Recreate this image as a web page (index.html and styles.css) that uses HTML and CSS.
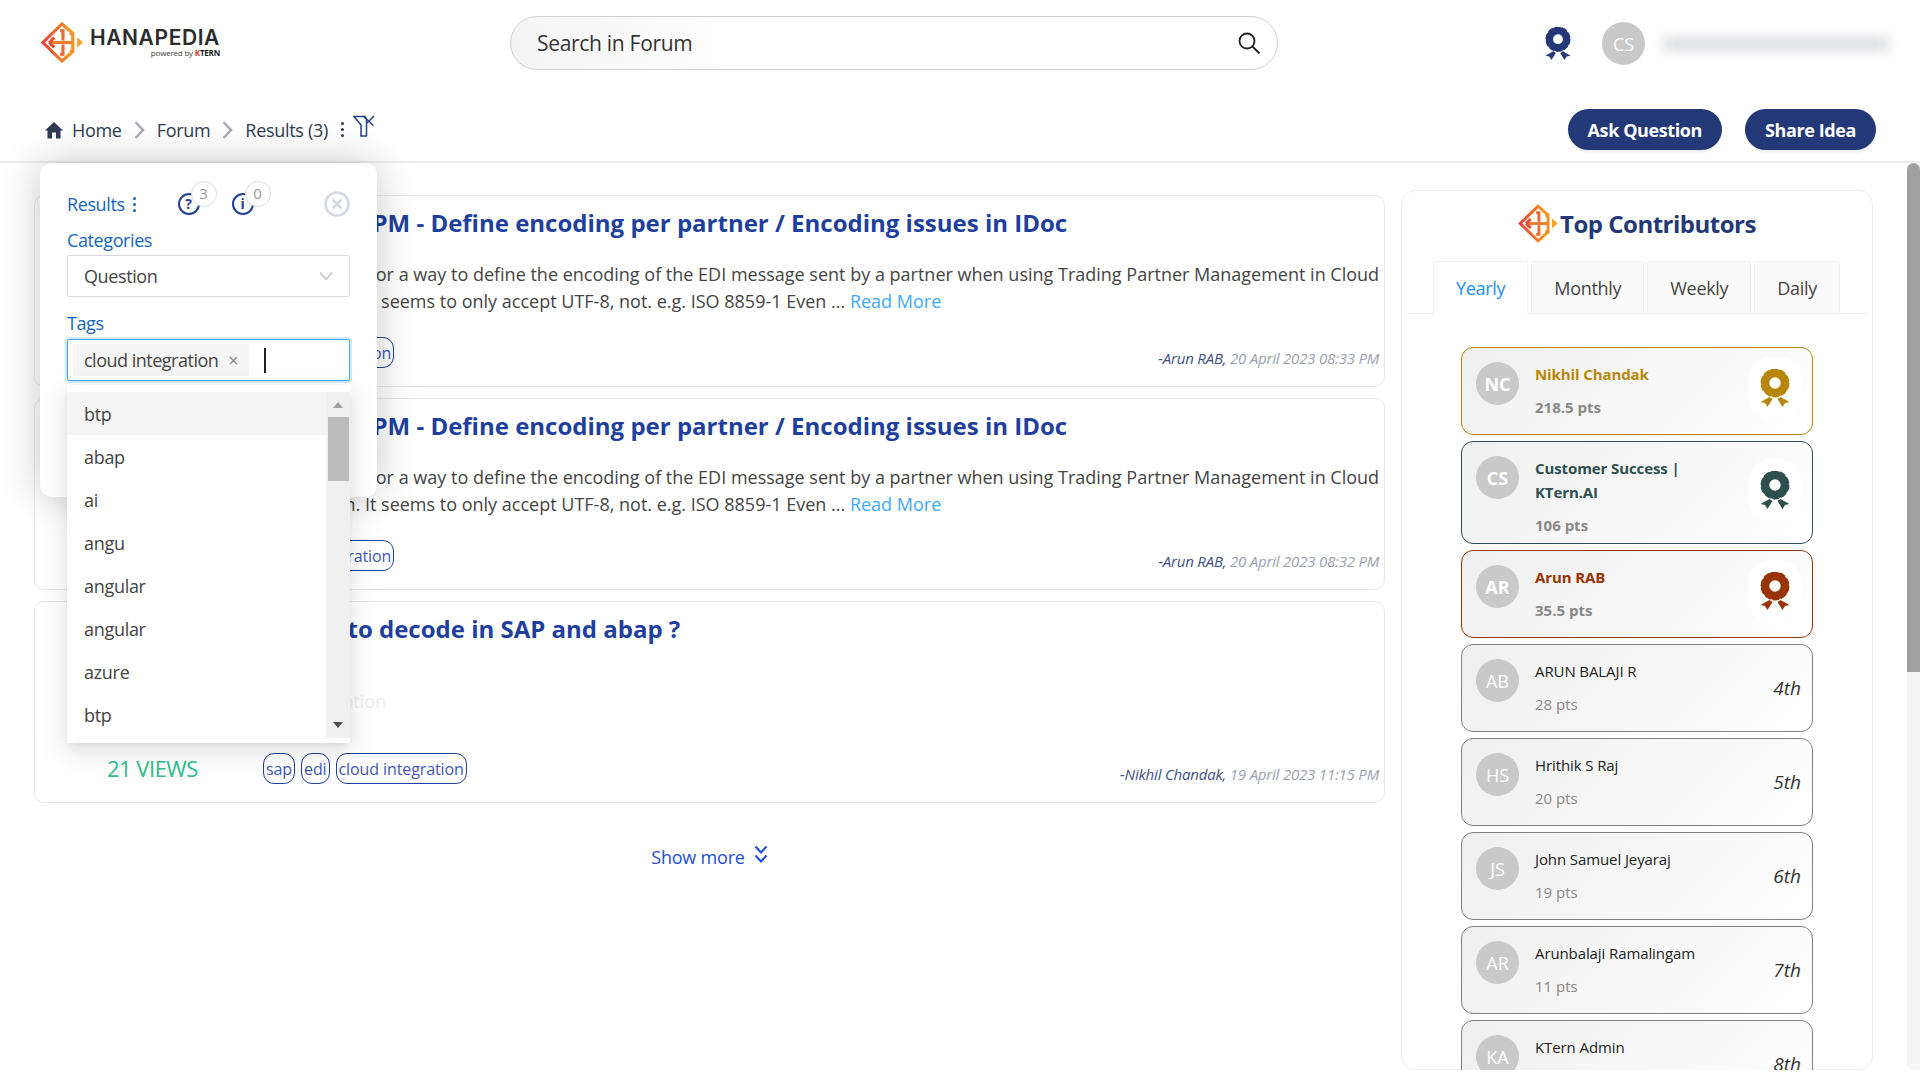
FILE: index.html
```html
<!DOCTYPE html>
<html lang="en">
<head>
<meta charset="UTF-8">
<title>Hanapedia Forum</title>
<link rel="stylesheet" href="styles.css">
</head>
<body>

<svg class="defs" width="0" height="0">
  <defs>
    <linearGradient id="logoGrad" x1="0" y1="0" x2="1" y2="0">
      <stop offset="0" stop-color="#ee4036"/>
      <stop offset="1" stop-color="#f7a11f"/>
    </linearGradient>
    <symbol id="logoMark" viewBox="0 0 44 42">
      <g fill="none" stroke="url(#logoGrad)" stroke-width="3.2" gradientUnits="userSpaceOnUse">
        <path d="M33 11.5 L22 2 L2.5 21 L22 40 L33 30.5"/>
        <path d="M9 21 H34" stroke="#f07b2b"/>
        <path d="M9 21 L14 16 M9 21 L14 26" stroke="#ee4c33"/>
        <path d="M20 9 H23 V19" stroke="#f0672f"/>
        <path d="M20 33 H23 V23" stroke="#f0672f"/>
        <path d="M30 12 H33 V30 H30" stroke="#f48f28"/>
      </g>
      <path d="M37.500 15.500 L43.500 21 L37.500 26.500 Z" fill="#f7a11f"/>
    </symbol>
    <symbol id="medal" viewBox="0 0 30 38">
      <circle cx="15" cy="14" r="9.800" fill="none" stroke="currentColor" stroke-width="8.200"/>
      <circle cx="15" cy="14" r="13.700" fill="none" stroke="currentColor" stroke-width="1.600" stroke-dasharray="6.500 2.100"/>
      <path d="M9.500 28 L0.500 33 L5 34 L7.500 38 L12.500 30 Z" fill="currentColor"/>
      <path d="M20.500 28 L29.500 33 L25 34 L22.500 38 L17.500 30 Z" fill="currentColor"/>
    </symbol>
  </defs>
</svg>

<div class="page">

  <header class="topbar">
    <div class="top-row">
      <div class="logo">
        <svg class="logo-mark"><use href="#logoMark"/></svg>
        <div class="logo-text">
          <span class="logo-name">HANAPEDIA</span>
          <span class="logo-sub">powered by <b><i>K</i>TERN</b></span>
        </div>
      </div>
      <div class="search">
        <span>Search in Forum</span>
        <svg width="24" height="24" viewBox="0 0 24 24" fill="none" stroke="#222" stroke-width="1.800"><circle cx="10" cy="10" r="7.500"/><path d="M15.500 15.500 L22.500 22.500"/></svg>
      </div>
      <div class="user">
        <svg class="user-medal"><use href="#medal"/></svg>
        <span class="avatar-sm">CS</span>
        <span class="user-blur"></span>
      </div>
    </div>
    <div class="crumb-row">
      <nav class="crumbs">
        <svg width="18" height="18" viewBox="0 0 18 18" fill="#2f3b52"><path d="M9 1 L18 9.500 H15.500 V17.500 H11 V11.500 H7 V17.500 H2.500 V9.500 H0 Z"/></svg>
        <span>Home</span>
        <svg class="crumb-sep" width="11" height="18" viewBox="0 0 11 18" fill="none" stroke="#a3a8b5" stroke-width="2.400"><path d="M1.500 1 L9 9 L1.500 17"/></svg>
        <span>Forum</span>
        <svg class="crumb-sep" width="11" height="18" viewBox="0 0 11 18" fill="none" stroke="#a3a8b5" stroke-width="2.400"><path d="M1.500 1 L9 9 L1.500 17"/></svg>
        <span>Results (3)</span>
        <span class="dots"><i></i><i></i><i></i></span>
        <svg class="filter-icon" width="22" height="22" viewBox="0 0 22 22" fill="none" stroke="#23408f" stroke-width="1.500"><path d="M1 1.500 H12 L13.500 4 V21 H8 V10 Z"/><path d="M10 1 L20.500 10.500 M21 1 L14 8"/></svg>
      </nav>
      <div class="actions">
        <button class="pill-btn">Ask Question</button>
        <button class="pill-btn">Share Idea</button>
      </div>
    </div>
  </header>

  <main class="main">
    <section class="results">
      <article class="card">
        <div class="card-views"></div>
        <div class="card-body">
          <h2>SAP CPI TPM - Define encoding per partner / Encoding issues in IDoc</h2>
          <p class="card-text">I am looking for a way to define the encoding of the EDI message sent by a partner when using Trading Partner Management in Cloud<br>Integration. It seems to only accept UTF-8, not. e.g. ISO 8859-1 Even ... <a href="#">Read More</a></p>
          <div class="card-foot">
            <div class="tags"><span>cloud integration</span></div>
            <div class="meta"><em>-Arun RAB,</em> 20 April 2023 08:33 PM</div>
          </div>
        </div>
      </article>

      <article class="card">
        <div class="card-views"></div>
        <div class="card-body">
          <h2>SAP CPI TPM - Define encoding per partner / Encoding issues in IDoc</h2>
          <p class="card-text">I am looking for a way to define the encoding of the EDI message sent by a partner when using Trading Partner Management in Cloud<br>Integration. It seems to only accept UTF-8, not. e.g. ISO 8859-1 Even ... <a href="#">Read More</a></p>
          <div class="card-foot">
            <div class="tags"><span>cloud integration</span></div>
            <div class="meta"><em>-Arun RAB,</em> 20 April 2023 08:32 PM</div>
          </div>
        </div>
      </article>

      <article class="card">
        <div class="card-views"><span>21 VIEWS</span></div>
        <div class="card-body">
          <h2>Where to decode in SAP and abap ?</h2>
          <p class="card-text card-text-empty">No description</p>
          <div class="card-foot">
            <div class="tags"><span>sap</span><span>edi</span><span>cloud integration</span></div>
            <div class="meta"><em>-Nikhil Chandak,</em> 19 April 2023 11:15 PM</div>
          </div>
        </div>
      </article>

      <a class="show-more" href="#">Show more
        <svg width="14" height="20" viewBox="0 0 14 20" fill="none" stroke="#1d4ed8" stroke-width="2"><path d="M1.500 1.500 L7 7.500 L12.500 1.500"/><path d="M1.500 10.500 L7 16.500 L12.500 10.500"/></svg>
      </a>
    </section>

    <aside class="contributors">
      <h3><svg class="heading-mark"><use href="#logoMark"/></svg>Top Contributors</h3>
      <div class="tabs">
        <span class="tab active">Yearly</span>
        <span class="tab">Monthly</span>
        <span class="tab">Weekly</span>
        <span class="tab">Daily</span>
      </div>
      <ul class="people">
        <li class="person gold">
          <span class="avatar">NC</span>
          <div class="person-info"><strong>Nikhil Chandak</strong><small>218.5 pts</small></div>
          <span class="medal-wrap"><svg><use href="#medal"/></svg></span>
        </li>
        <li class="person teal">
          <span class="avatar">CS</span>
          <div class="person-info"><strong>Customer Success | KTern.AI</strong><small>106 pts</small></div>
          <span class="medal-wrap"><svg><use href="#medal"/></svg></span>
        </li>
        <li class="person rust">
          <span class="avatar">AR</span>
          <div class="person-info"><strong>Arun RAB</strong><small>35.5 pts</small></div>
          <span class="medal-wrap"><svg><use href="#medal"/></svg></span>
        </li>
        <li class="person">
          <span class="avatar">AB</span>
          <div class="person-info"><strong>ARUN BALAJI R</strong><small>28 pts</small></div>
          <span class="rank">4th</span>
        </li>
        <li class="person">
          <span class="avatar">HS</span>
          <div class="person-info"><strong>Hrithik S Raj</strong><small>20 pts</small></div>
          <span class="rank">5th</span>
        </li>
        <li class="person">
          <span class="avatar">JS</span>
          <div class="person-info"><strong>John Samuel Jeyaraj</strong><small>19 pts</small></div>
          <span class="rank">6th</span>
        </li>
        <li class="person">
          <span class="avatar">AR</span>
          <div class="person-info"><strong>Arunbalaji Ramalingam</strong><small>11 pts</small></div>
          <span class="rank">7th</span>
        </li>
        <li class="person">
          <span class="avatar">KA</span>
          <div class="person-info"><strong>KTern Admin</strong><small>10 pts</small></div>
          <span class="rank">8th</span>
        </li>
      </ul>
    </aside>

    <div class="page-scroll"><div class="page-thumb"></div></div>
  </main>

  <!-- filter popup lies over the results -->
  <div class="filter-pop">
    <div class="pop-head">
      <span class="pop-title">Results</span>
      <span class="dots dots-blue"><i></i><i></i><i></i></span>
      <span class="count-icon count-q">
        <svg width="24" height="24" viewBox="0 0 24 24" fill="none" stroke="#23408f" stroke-width="2"><circle cx="12" cy="12" r="10"/></svg>
        <b>?</b><span class="count-num">3</span>
      </span>
      <span class="count-icon count-i">
        <svg width="24" height="24" viewBox="0 0 24 24" fill="none" stroke="#23408f" stroke-width="2"><circle cx="12" cy="12" r="10"/></svg>
        <b>i</b><span class="count-num">0</span>
      </span>
      <svg class="pop-close" width="26" height="26" viewBox="0 0 26 26" fill="none" stroke="#d5d8e2" stroke-width="2.500"><circle cx="13" cy="13" r="11.500"/><path d="M8.500 8.500 L17.500 17.500 M17.500 8.500 L8.500 17.500"/></svg>
    </div>
    <label class="pop-label">Categories</label>
    <div class="pop-select">
      <span>Question</span>
      <svg width="14" height="10" viewBox="0 0 14 10" fill="none" stroke="#bdbdbd" stroke-width="1.300"><path d="M1 1.500 L7 8.500 L13 1.500"/></svg>
    </div>
    <label class="pop-label pop-label-tags">Tags</label>
    <div class="pop-tags">
      <span class="chip">cloud integration <i>×</i></span>
      <span class="caret"></span>
    </div>
  </div>

  <div class="tag-menu">
    <ul>
      <li class="current">btp</li>
      <li>abap</li>
      <li>ai</li>
      <li>angu</li>
      <li>angular</li>
      <li>angular</li>
      <li>azure</li>
      <li>btp</li>
    </ul>
    <div class="menu-scroll">
      <span class="arrow-up"></span>
      <span class="menu-thumb"></span>
      <span class="arrow-down"></span>
    </div>
  </div>

</div>

</body>
</html>
```

FILE: styles.css
```css
* {
  box-sizing: border-box;
}

body {
  margin: 0;
  background: #fff;
  font-family: "Open Sans", "Noto Sans", sans-serif;
  color: #333;
  overflow: hidden;
}

.defs {
  position: absolute;
}

.page {
  position: relative;
  height: 1070px;
  overflow: hidden;
  display: flex;
  flex-direction: column;
}

/* top bar */
.topbar {
  height: 163px;
  flex: none;
  border-bottom: 2px solid #ececec;
}

.top-row {
  height: 86px;
  display: flex;
  align-items: flex-start;
}

.logo {
  width: 470px;
  margin-left: 40px;
  margin-top: 22px;
  display: flex;
  align-items: flex-start;
}

.logo-mark {
  width: 44px;
  height: 41px;
}

.logo-text {
  margin-left: 3px;
  display: flex;
  flex-direction: column;
  align-items: flex-end;
  width: 133px;
  padding-top: 5px;
}

.logo-name {
  font-family: "Inter", sans-serif;
  font-weight: 600;
  font-size: 21px;
  line-height: 22px;
  letter-spacing: 0.6px;
  color: #2b2b2b;
}

.logo-sub {
  font-size: 8px;
  line-height: 8px;
  color: #444;
  letter-spacing: -0.2px;
}

.logo-sub b {
  color: #222;
}

.logo-sub i {
  color: #e5342b;
  font-style: normal;
}

.search {
  width: 768px;
  height: 54px;
  margin-top: 16px;
  padding: 0 16px 0 26px;
  display: flex;
  align-items: center;
  justify-content: space-between;
  border: 1px solid #cfd0d6;
  border-radius: 27px;
  background: linear-gradient(90deg, #f4f4f4, #fff 30%);
  font-size: 21px;
  letter-spacing: -0.3px;
  color: #333;
}

.user {
  display: flex;
  align-items: center;
  margin-left: 267px;
  margin-top: 22px;
}

.user-medal {
  width: 26px;
  height: 33px;
  color: #233876;
}

.avatar-sm {
  width: 43px;
  height: 43px;
  margin-left: 31px;
  border-radius: 50%;
  background: #c9c9c9;
  color: #fff;
  font-size: 18px;
  display: flex;
  align-items: center;
  justify-content: center;
}

.user-blur {
  width: 226px;
  height: 14px;
  margin-left: 18px;
  background: #dcdde0;
  filter: blur(6px);
}

.crumb-row {
  display: flex;
  justify-content: space-between;
  align-items: flex-start;
  padding: 23px 44px 0 45px;
}

.crumbs {
  display: flex;
  align-items: center;
  height: 41px;
  font-size: 18px;
  letter-spacing: -0.3px;
  font-weight: 500;
  color: #2f3b52;
}

.crumbs > span:first-of-type {
  margin-left: 9px;
}

.crumb-sep {
  margin: 0 12px;
}

.dots {
  display: inline-flex;
  flex-direction: column;
  gap: 3px;
  margin-left: 13px;
}

.dots i {
  display: block;
  width: 3px;
  height: 3px;
  border-radius: 50%;
  background: #2f3b52;
}

.filter-icon {
  margin-left: 9px;
  margin-top: -8px;
}

.actions {
  display: flex;
  gap: 23px;
}

.pill-btn {
  height: 41px;
  padding: 0 20px;
  border: none;
  border-radius: 21px;
  background: #233876;
  color: #fff;
  font-family: inherit;
  font-size: 18px;
  font-weight: 700;
  letter-spacing: -0.4px;
  box-shadow: 0 2px 3px rgba(0, 0, 0, 0.08);
}

/* main area */
.main {
  flex: 1;
  display: flex;
  align-items: stretch;
  min-height: 0;
  overflow: hidden;
}

.results {
  width: 1351px;
  margin-left: 34px;
  padding-top: 32px;
  display: flex;
  flex-direction: column;
  gap: 11.5px;
  flex: none;
}

.card {
  display: flex;
  border: 1px solid #e8e8e8;
  border-radius: 10px;
  background: #fff;
}

.card-views {
  width: 228px;
  flex: none;
  display: flex;
  align-items: flex-end;
  padding: 0 0 19px 72px;
  font-size: 22px;
  letter-spacing: -0.5px;
  color: #2fbd8d;
}

.card-body {
  flex: 1;
  padding: 10px 5px 17.500px 0;
}

.card h2 {
  margin: 0;
  font-size: 24px;
  line-height: 34px;
  font-weight: 700;
  color: #1e3f9e;
}

.card-text {
  margin: 21px 0 0;
  font-size: 18px;
  line-height: 27px;
  color: #444;
  white-space: nowrap;
}

.card-text a {
  color: #40a9ff;
  text-decoration: none;
}

.card-text-empty {
  height: 64px;
  padding-top: 21px;
  color: #eeeeee;
}

.card-foot {
  margin-top: 22px;
  display: flex;
  justify-content: space-between;
  align-items: center;
}

.tags {
  display: flex;
  gap: 6px;
}

.tags span {
  height: 31px;
  padding: 0 2px;
  display: flex;
  align-items: center;
  border: 1.500px solid #1e40a0;
  border-radius: 11px;
  font-size: 16px;
  letter-spacing: -0.1px;
  color: #3f58b3;
}

.meta {
  padding-top: 10px;
  font-size: 15px;
  font-style: italic;
  letter-spacing: -0.2px;
  color: #9aa0ad;
}

.meta em {
  color: #3f4f86;
}

.show-more {
  margin-top: 31px;
  align-self: center;
  display: flex;
  align-items: flex-start;
  gap: 9px;
  font-size: 18px;
  letter-spacing: -0.2px;
  color: #1d4ed8;
  text-decoration: none;
}

.contributors {
  width: 472px;
  margin-left: 16px;
  margin-top: 27px;
  flex: none;
  border: 1px solid #ececec;
  border-radius: 14px;
}

.contributors h3 {
  margin: 0;
  padding-top: 13px;
  height: 70px;
  display: flex;
  justify-content: center;
  font-size: 24px;
  line-height: 40px;
  font-weight: 700;
  letter-spacing: -0.5px;
  color: #233876;
}

.heading-mark {
  width: 40px;
  height: 39px;
  margin-right: 2px;
}

.tabs {
  display: flex;
  gap: 3px;
  margin: 0 5px;
  padding-left: 26px;
  border-bottom: 1px solid #f0f0f0;
}

.tab {
  height: 53px;
  margin-bottom: -1px;
  padding: 0 22px;
  display: flex;
  align-items: center;
  border: 1px solid #f0f0f0;
  border-radius: 2px 2px 0 0;
  background: #fafafa;
  font-size: 18px;
  letter-spacing: -0.3px;
  color: #444;
}

.tab.active {
  background: #fff;
  border-bottom-color: #fff;
  color: #1890ff;
}

.people {
  list-style: none;
  margin: 33px 59px 0;
  padding: 0;
  display: flex;
  flex-direction: column;
  gap: 6px;
}

.person {
  flex: none;
  min-height: 88px;
  padding: 14px 11px 0 14px;
  display: flex;
  gap: 16px;
  border: 1.500px solid #808080;
  border-radius: 12px;
  background: linear-gradient(135deg, #efefef, #fff);
  position: relative;
}

.avatar {
  width: 43px;
  height: 43px;
  flex: none;
  border-radius: 50%;
  background: #c9c9c9;
  color: #fff;
  font-size: 18px;
  display: flex;
  align-items: center;
  justify-content: center;
}

.person-info {
  flex: 1;
  max-width: 190px;
}

.person-info strong {
  display: block;
  font-size: 15px;
  line-height: 24px;
  font-weight: 400;
  letter-spacing: -0.1px;
  color: #222;
}

.person-info small {
  display: block;
  margin-top: 9px;
  font-size: 15px;
  line-height: 24px;
  color: #888;
}

.rank {
  margin-left: auto;
  align-self: center;
  margin-top: -14px;
  font-size: 19px;
  font-style: italic;
  color: #333;
}

.gold,
.teal,
.rust {
  padding-bottom: 6px;
}

.gold .avatar,
.teal .avatar,
.rust .avatar {
  font-weight: 700;
}

.gold .person-info strong,
.teal .person-info strong,
.rust .person-info strong,
.gold .person-info small,
.teal .person-info small,
.rust .person-info small {
  font-weight: 700;
}

.gold { border-color: #b8860b; color: #b8860b; }
.teal { border-color: #2f4f4f; color: #2f4f4f; }
.rust { border-color: #993300; color: #993300; }

.gold strong,
.teal strong,
.rust strong {
  color: inherit !important;
}

.medal-wrap {
  width: 52px;
  height: 62px;
  margin-left: auto;
  align-self: center;
  margin-top: -14px;
  display: flex;
  align-items: center;
  justify-content: center;
  border-radius: 22px;
  background: #fff;
}

.medal-wrap svg {
  width: 30px;
  height: 38px;
}

.page-scroll {
  width: 13px;
  margin-left: auto;
  flex: none;
  background: #f5f5f5;
  border-radius: 7px 0 0 7px;
}

.page-thumb {
  height: 509px;
  background: #a0a0a0;
  border-radius: 7px 7px 0 0;
}

/* filter popup */
.filter-pop {
  position: absolute;
  left: 40px;
  top: 163px;
  width: 337px;
  height: 334px;
  padding: 28px 27px 0;
  background: #fff;
  border-radius: 12px;
  box-shadow: 0 0 40px rgba(0, 0, 0, 0.22);
}

.pop-head {
  height: 26px;
  display: flex;
  align-items: center;
  position: relative;
}

.pop-title,
.pop-label {
  font-size: 18px;
  letter-spacing: -0.4px;
  color: #1565c0;
}

.dots-blue {
  margin-left: 8px;
  gap: 3px;
}

.dots-blue i {
  background: #1565c0;
}

.count-icon {
  position: relative;
  width: 24px;
  height: 24px;
  margin-left: 41px;
  color: #23408f;
}

.count-i {
  margin-left: 30px;
}

.count-icon b {
  position: absolute;
  left: 0;
  top: 0;
  width: 24px;
  text-align: center;
  font-size: 14px;
  line-height: 24px;
}

.count-num {
  position: absolute;
  left: 14px;
  top: -11px;
  width: 26px;
  height: 26px;
  border: 1px solid #ddd;
  border-radius: 50%;
  background: #fff;
  color: #999;
  font-size: 15px;
  line-height: 23px;
  text-align: center;
}

.pop-close {
  margin-left: auto;
}

.pop-label {
  display: block;
  margin-top: 10px;
  line-height: 26px;
}

.pop-label-tags {
  margin-top: 13px;
}

.pop-select {
  height: 42px;
  margin-top: 2px;
  padding: 0 16px;
  display: flex;
  align-items: center;
  justify-content: space-between;
  border: 1px solid #d9d9d9;
  border-radius: 2px;
  font-size: 18px;
  letter-spacing: -0.4px;
  color: #444;
}

.pop-tags {
  height: 42px;
  margin-top: 3px;
  padding: 0 5px;
  display: flex;
  align-items: center;
  border: 1px solid #40a9ff;
  border-radius: 2px;
  box-shadow: 0 0 0 2px rgba(24, 144, 255, 0.2);
}

.chip {
  height: 32px;
  width: 176px;
  padding: 0 11px;
  display: flex;
  align-items: center;
  justify-content: space-between;
  border-radius: 2px;
  background: #f5f5f5;
  font-size: 18px;
  letter-spacing: -0.5px;
  color: #444;
  white-space: nowrap;
}

.chip i {
  font-style: normal;
  font-size: 18px;
  color: #888;
}

.caret {
  width: 1.500px;
  height: 25px;
  margin-left: 15px;
  background: #222;
}

/* tag dropdown */
.tag-menu {
  position: absolute;
  left: 67px;
  top: 385px;
  width: 283px;
  height: 358px;
  padding: 7px 0 5px;
  display: flex;
  background: #fff;
  border-radius: 2px;
  box-shadow: 0 3px 6px -4px rgba(0, 0, 0, 0.12), 0 6px 16px rgba(0, 0, 0, 0.08), 0 9px 28px 8px rgba(0, 0, 0, 0.05);
}

.tag-menu ul {
  flex: 1;
  list-style: none;
  margin: 0;
  padding: 0;
  font-size: 18px;
  letter-spacing: -0.3px;
  color: #444;
}

.tag-menu li {
  height: 43.100px;
  padding: 0 17px;
  display: flex;
  align-items: center;
}

.tag-menu li.current {
  background: #f5f5f5;
}

.menu-scroll {
  width: 24px;
  flex: none;
  padding: 0 1px;
  display: flex;
  flex-direction: column;
  align-items: center;
  background: #f0f0f0;
}

.arrow-up {
  margin-top: 10px;
  border: 5.500px solid transparent;
  border-top: 0;
  border-bottom: 6px solid #a3a3a3;
}

.menu-thumb {
  width: 21px;
  height: 64px;
  margin-top: 9px;
  background: #bbbbbb;
}

.arrow-down {
  margin-top: auto;
  margin-bottom: 10px;
  border: 5.500px solid transparent;
  border-bottom: 0;
  border-top: 6px solid #505050;
}
```
